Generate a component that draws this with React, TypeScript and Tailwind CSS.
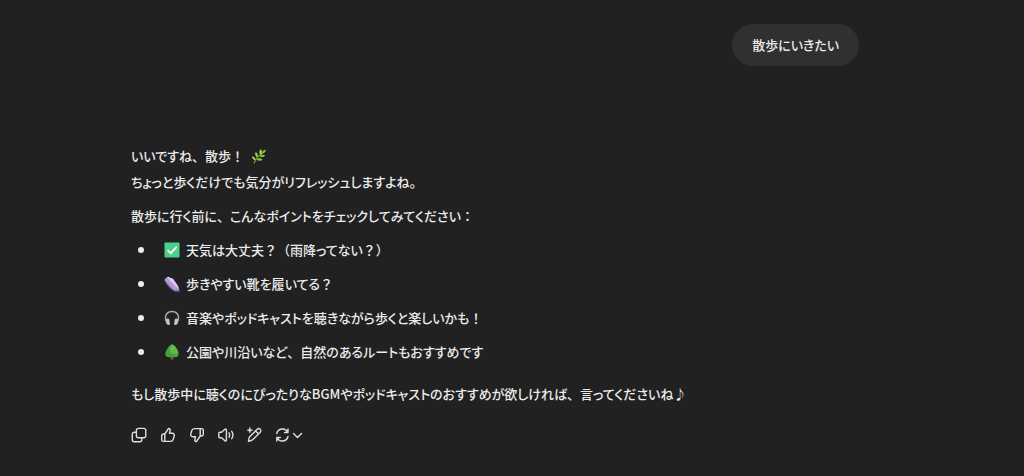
import type { ReactNode } from "react";

function Herb() {
  return (
    <svg viewBox="0 0 16 16" className="ml-1 inline-block size-4 align-[-3px]" role="img" aria-label="葉">
      <path d="M3.2 15C4.5 10.8 8 7.5 12 4.6" fill="none" stroke="#5f9e2f" strokeWidth="1.3" strokeLinecap="round" />
      <path d="M9.4 7.2C7.6 4.6 8.2 2.6 10 1c1.3 2 1.400 4-.6 6.200ZM6.300 9.500C3.900 7.800 3.800 5.800 4.700 4c2 1.200 2.700 3.200 1.600 5.500ZM4.500 12.200C2 11.700 1 10.200 1 8.200c2.300.3 3.700 1.800 3.500 4Z" fill="#a3d64b" />
      <path d="M11.200 5.300C11 3.300 12.600 2 14.800 1.800c0 2.200-1.200 3.600-3.600 3.500ZM8.600 8.200c1.600-1.800 3.700-2 5.600-.8-1.400 1.900-3.500 2.200-5.600.8ZM5.700 11.600c1.700-1.700 4-1.700 5.800-.2-1.600 1.800-3.900 2-5.800.2Z" fill="#8cc63e" />
    </svg>
  );
}

function Check() {
  return (
    <svg viewBox="0 0 16 16" className="size-4" role="img" aria-label="チェック">
      <rect x="0.500" y="0.500" width="15" height="15" rx="1" fill="#4fd08a" />
      <path d="m3.500 8 3.200 3.200 6-6.400" fill="none" stroke="#fff" strokeWidth="1.700" />
    </svg>
  );
}

function Shoe() {
  return (
    <svg viewBox="0 0 16 16" className="size-4" role="img" aria-label="靴">
      <path d="M.4 4C1.300 2.200 2.800 1 4.600.8c1 1.200 2.800 1.200 4.500 2.200l3.700 5.200c1.500 2 2.400 3.800 2.600 6.400l-4.500.2C7.200 11.800 3.400 8.400.4 4Z" fill="#b49ad4" />
      <path d="M4.600.8c1 1.200 2.800 1.200 4.500 2.200l3.700 5.200c.8.8 1.400 2 1.800 3.500-2-.2-3.600-1.800-4.800-3.300L3.200 1.500Z" fill="#d9c9ee" />
      <path d="M.4 4c2.800 4.400 6.800 7.800 10.500 10.300l4.500-.1v1.400h-4.700C6.500 13 2.500 9.200.4 4Z" fill="#8d70af" />
    </svg>
  );
}

function Headphones() {
  return (
    <svg viewBox="0 0 16 16" className="size-4" role="img" aria-label="ヘッドホン">
      <path d="M2.100 11C0 5 3.500 1.500 8 1.500S16 5 13.900 11" fill="none" stroke="#aaa5ae" strokeWidth="1.500" />
      <path d="M2 9.200c1-.9 2.400-.9 3.200 0l.8 5c-.7 1-2.200 1-3 .1C2 13 1.400 11 2 9.200ZM14 9.200c-1-.9-2.400-.9-3.200 0l-.8 5c.7 1 2.200 1 3 .1 1-1.300 1.600-3.300 1-5.100Z" fill="#c9c4cd" />
    </svg>
  );
}

function Tree() {
  return (
    <svg viewBox="0 0 16 16" className="size-4" role="img" aria-label="木">
      <path d="M6.800 11h2.400v4.700H6.800z" fill="#8a514b" />
      <path d="M8 .5c1.300 0 3 1.500 4.200 3.400 1.500 2.100 2.500 4.100 2.500 6.200 0 2-1.400 3.100-3.400 3.100H4.700c-2 0-3.400-1.100-3.400-3.100 0-2.100 1-4.100 2.500-6.200C5 2 6.700.5 8 .5Z" fill="#46a03f" />
      <path d="M8 .5c1.300 0 3 1.500 4.200 3.400 1.500 2.100 2 4.100 1.300 5.400-1.500 1.500-5 1-6.700-.8C5.500 7 5.800 2.500 8 .5Z" fill="#66b94c" />
    </svg>
  );
}

function ActionIcon({ children }: { children: ReactNode }) {
  return (
    <svg viewBox="0 0 16 16" className="size-4" fill="none" stroke="currentColor" strokeWidth="1.400" strokeLinecap="round" strokeLinejoin="round" aria-hidden="true">
      {children}
    </svg>
  );
}

// Kana are set proportionally, while punctuation keeps its full-width cell.
function Sentence({ children }: { children: string }) {
  return children.split(/([、！？（）：]+)/).map((part, index) =>
    index % 2 === 1 ? (
      <span key={index} className="[font-feature-settings:normal]">
        {part}
      </span>
    ) : (
      part
    ),
  );
}

const actions: { label: string; icon: ReactNode }[] = [
  {
    label: "コピー",
    icon: (
      <>
        <rect x="5.400" y="1.400" width="9.400" height="9.400" rx="2" />
        <path d="M5.200 5.200H3.300a2 2 0 0 0-2 2v5.500a2 2 0 0 0 2 2h5.500a2 2 0 0 0 2-2v-1.900" />
      </>
    ),
  },
  {
    label: "良い回答です",
    icon: (
      <path d="M4.800 7H3.400a1.700 1.700 0 0 0-1.700 1.700v4a1.700 1.700 0 0 0 1.700 1.700h7.100c1.300 0 2.400-.8 2.700-2l1-3.400c.5-1.500-.4-2.800-1.900-2.800H9.500l.6-2.800c.2-1-.4-2-1.500-2L4.800 7v7.200" />
    ),
  },
  {
    label: "良くない回答です",
    icon: (
      <path d="M11.200 9h1.400a1.700 1.700 0 0 0 1.700-1.700v-4a1.700 1.700 0 0 0-1.700-1.700H5.500c-1.300 0-2.400.8-2.700 2L1.800 7c-.5 1.500.4 2.800 1.900 2.800h2.800l-.6 2.800c-.2 1 .4 2 1.500 2L11.200 9V1.800" />
    ),
  },
  {
    label: "音声で読み上げる",
    icon: (
      <>
        <path d="M.8 6.300c0-.6.400-1 1-1h1.800l3.300-3c.6-.6 1.500-.2 1.500.6v10.200c0 .8-.9 1.200-1.500.6l-3.300-3H1.800a1 1 0 0 1-1-1Z" />
        <path d="M11 5.800c.8 1.300.8 3.100 0 4.400M13.700 4.300c1.500 2.200 1.500 5.200 0 7.400" />
      </>
    ),
  },
  {
    label: "キャンバスで編集する",
    icon: (
      <>
        <path d="m2.700 9.700 7.500-7.500a2.100 2.100 0 0 1 3 3l-7.600 7.600c-.7.700-2.400 1.300-4.100 1.500.1-1.700.5-3.600 1.200-4.600ZM8.600 3.900l3 3" />
        <path d="M2.900.3c.3 2 .9 2.600 2.900 2.900-2 .3-2.600.9-2.900 2.900C2.600 4.100 2 3.500 0 3.200c2-.3 2.600-.9 2.900-2.900Z" fill="currentColor" strokeWidth=".5" />
      </>
    ),
  },
];

const tips: { icon: ReactNode; text: string }[] = [
  { icon: <Check />, text: "天気は大丈夫？（雨降ってない？）" },
  { icon: <Shoe />, text: "歩きやすい靴を履いてる？" },
  { icon: <Headphones />, text: "音楽やポッドキャストを聴きながら歩くと楽しいかも！" },
  { icon: <Tree />, text: "公園や川沿いなど、自然のあるルートもおすすめです" },
];

export default function App() {
  return (
    <div className="min-h-screen bg-[#212121] pr-[34px] font-['Noto_Sans_CJK_JP',sans-serif] text-[13px] leading-[26px] font-medium text-[#ececec] [font-feature-settings:'palt']">
      <main className="mx-auto max-w-[728px] pt-6 pb-8">
        <div className="flex justify-end">
          <p className="rounded-full bg-[#303030] px-5 py-2">散歩にいきたい</p>
        </div>

        <article className="mt-[77px]">
          <p>
            <Sentence>いいですね、散歩！</Sentence> <Herb />
            <br />
            ちょっと歩くだけでも気分がリフレッシュしますよね。
          </p>
          <p className="mt-2">
            <Sentence>散歩に行く前に、こんなポイントをチェックしてみてください：</Sentence>
          </p>
          <ul className="mt-2 flex flex-col gap-2">
            {tips.map((tip) => (
              <li key={tip.text} className="flex items-center pl-[7px]">
                <span className="mr-5 size-1.5 shrink-0 rounded-full bg-[#ececec]" />
                <span className="mr-1.5 shrink-0">{tip.icon}</span>
                <span>
                  <Sentence>{tip.text}</Sentence>
                </span>
              </li>
            ))}
          </ul>
          <p className="mt-4">
            <Sentence>もし散歩中に聴くのにぴったりなBGMやポッドキャストのおすすめが欲しければ、言ってくださいね♪</Sentence>
          </p>
        </article>

        <div className="mt-5 flex gap-[13px] text-[#dedede]">
          {actions.map((action) => (
            <button key={action.label} type="button" aria-label={action.label}>
              <ActionIcon>{action.icon}</ActionIcon>
            </button>
          ))}
          <button type="button" aria-label="再生成する" className="flex">
            <ActionIcon>
              <path d="M.8 6.500A5.800 5.800 0 0 1 11.700 5.300M12 9.500A5.800 5.800 0 0 1 1.100 10.700M12 2v3.500H8.500M.8 14v-3.500h3.500" />
            </ActionIcon>
            <ActionIcon>
              <path d="m1.500 6.500 4 4 4-4" />
            </ActionIcon>
          </button>
        </div>
      </main>
    </div>
  );
}
